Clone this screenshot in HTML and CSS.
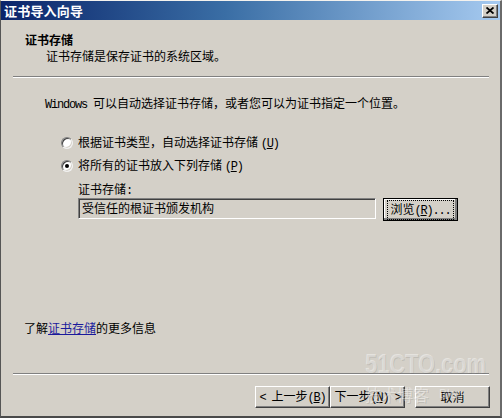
FILE: index.html
```html
<!DOCTYPE html>
<html lang="zh-CN">
<head>
<meta charset="utf-8">
<title>证书导入向导</title>
<link rel="stylesheet" href="styles.css">
</head>
<body>
<div class="window">
  <div class="titlebar">
    <span class="title">证书导入向导</span>
    <span class="close"><svg width="8" height="7" viewBox="0 0 8 7"><path d="M0.5 0.5 L7.5 6.5 M7.5 0.5 L0.5 6.5" stroke="#000" stroke-width="1.8" fill="none"/></svg></span>
  </div>
  <div class="header">
    <div class="h-title">证书存储</div>
    <div class="h-sub">证书存储是保存证书的系统区域。</div>
  </div>
  <div class="sep sep-top"></div>
  <div class="content">
    <p class="intro"><span class="a">Windows </span>可以自动选择证书存储，或者您可以为证书指定一个位置。</p>
    <div class="options">
      <div class="radio-row"><span class="radio"></span><span>根据证书类型，自动选择证书存储 <span class="a">(<u>U</u>)</span></span></div>
      <div class="radio-row"><span class="radio checked"></span><span>将所有的证书放入下列存储 <span class="a">(<u>P</u>)</span></span></div>
      <div class="store">
        <div class="store-label">证书存储<span class="a">:</span></div>
        <div class="store-row">
          <div class="field">受信任的根证书颁发机构</div>
          <button class="btn browse"><span class="focus">浏览<span class="a">(<u>R</u>)...</span></span></button>
        </div>
      </div>
    </div>
    <p class="more">了解<a class="link">证书存储</a>的更多信息</p>
  </div>
  <div class="footer">
    <div class="sep sep-bottom"></div>
    <div class="buttons">
      <button class="btn"><span><span class="a">&lt;&nbsp;</span>上一步<span class="a">(<u>B</u>)</span></span></button>
      <button class="btn"><span>下一步<span class="a">(<u>N</u>)&nbsp;&gt;</span></span></button>
      <button class="btn cancel"><span>取消</span></button>
    </div>
  </div>
  <div class="watermark">
    <div class="wm-big">51CTO.com</div>
    <div class="wm-small"><span>技术博客</span><span class="wm-blog">Blog</span></div>
  </div>
</div>
</body>
</html>
```

FILE: styles.css
```css
html, body {
  margin: 0;
  padding: 0;
  background: #D4D0C8;
}

body {
  font-family: "Noto Sans CJK SC", "Noto Sans", sans-serif;
  font-size: 12px;
  line-height: 14px;
  color: #000;
}

.window {
  position: relative;
  width: 502px;
  height: 418px;
  box-sizing: border-box;
  background: #D4D0C8;
  border-top: 1px solid #f4f2ee;
  border-left: 1px solid #555;
  border-right: 2px solid #6a6a6a;
  border-bottom: 2px solid #4a4a4a;
  display: flex;
  flex-direction: column;
  overflow: hidden;
}

.a {
  font-family: "Liberation Mono", monospace;
  letter-spacing: -1.2px;
}

u {
  text-decoration: underline;
  text-underline-offset: 1px;
}

.titlebar {
  height: 19px;
  flex: none;
  display: flex;
  align-items: center;
  justify-content: space-between;
  background: linear-gradient(to right, #0A246A 0%, #3a6ea5 45%, #A6CAF0 100%);
}

.title {
  color: #fff;
  font-weight: bold;
  font-size: 13px;
  padding-left: 3px;
  letter-spacing: 0.2px;
}

.close {
  width: 16px;
  height: 14px;
  box-sizing: border-box;
  margin-right: 2px;
  background: #D4D0C8;
  border: 1px solid;
  border-color: #fff #404040 #404040 #fff;
  box-shadow: inset -1px -1px #808080;
  display: flex;
  align-items: center;
  justify-content: center;
}

.header {
  flex: none;
  padding-top: 13px;
}

.h-title {
  font-weight: bold;
  padding-left: 24px;
}

.h-sub {
  margin-top: 2px;
  padding-left: 45px;
}

.sep {
  flex: none;
  height: 0;
  border-top: 1px solid #808080;
  border-bottom: 1px solid #fff;
  margin: 0 11px 0 12px;
}

.sep-top {
  margin-top: 13px;
}

.content {
  flex: 1;
  padding-top: 18px;
}

.intro {
  margin: 0;
  padding-left: 44px;
}

.options {
  margin-top: 24px;
}

.radio-row {
  display: flex;
  align-items: center;
  height: 14px;
  padding-left: 60px;
  margin-bottom: 9px;
}

.radio {
  position: relative;
  width: 12px;
  height: 12px;
  box-sizing: border-box;
  border-radius: 50%;
  border: 1px solid;
  border-color: #808080 #f0f0f0 #f0f0f0 #808080;
  box-shadow: inset 1px 1px #404040, inset -1px -1px #D4D0C8;
  background: #fff;
  margin-right: 5px;
  flex: none;
}

.radio.checked::after {
  content: "";
  position: absolute;
  left: 3px;
  top: 3px;
  width: 4px;
  height: 4px;
  border-radius: 50%;
  background: #000;
}

.store {
  padding-left: 77px;
}

.store-row {
  display: flex;
  align-items: flex-start;
}

.field {
  width: 298px;
  height: 21px;
  box-sizing: border-box;
  border: 1px solid;
  border-color: #808080 #fff #fff #808080;
  box-shadow: inset 1px 1px #404040, inset -1px -1px #D4D0C8;
  background: #D4D0C8;
  padding-left: 3px;
  line-height: 18px;
}

.btn {
  font-family: "Noto Sans CJK SC", "Noto Sans", sans-serif;
  font-size: 12px;
  line-height: 14px;
  color: #000;
  width: 75px;
  height: 22px;
  box-sizing: border-box;
  background: #D4D0C8;
  border: 1px solid;
  border-color: #fff #404040 #404040 #fff;
  box-shadow: inset -1px -1px #808080;
  padding: 0;
  margin: 0;
  display: flex;
  align-items: center;
  justify-content: center;
}

.browse {
  margin-left: 7px;
  height: 23px;
  border-width: 1px;
  outline: 1px solid #000;
  outline-offset: -1px;
  border-color: #fff #404040 #404040 #fff;
  box-shadow: inset -2px -2px #808080, inset 1px 1px #fff;
}

.focus {
  border: 1px dotted #000;
  padding: 1px 2px;
  line-height: 13px;
}

.more {
  margin: 100px 0 0;
  padding-left: 23px;
}

.link {
  color: #1a1a9c;
  text-decoration: underline;
}

.footer {
  flex: none;
}

.buttons {
  display: flex;
  justify-content: flex-end;
  margin-top: 11px;
  padding-right: 10px;
  padding-bottom: 8px;
}

.cancel {
  margin-left: 10px;
}

.watermark {
  position: absolute;
  left: 364px;
  top: 347px;
  width: 128px;
  color: rgba(255, 255, 255, 0.42);
  pointer-events: none;
  text-shadow: 1px 1px rgba(90, 90, 90, 0.16);
}

.wm-big {
  font-family: "Liberation Sans", sans-serif;
  font-weight: bold;
  font-size: 28px;
  line-height: 32px;
  transform: scaleX(0.78);
  transform-origin: left center;
  white-space: nowrap;
}

.wm-small {
  font-size: 16px;
  line-height: 20px;
  margin-top: 4px;
  display: flex;
  gap: 10px;
  align-items: flex-end;
}

.wm-blog {
  font-family: "Liberation Sans", sans-serif;
  font-size: 12px;
}
```
